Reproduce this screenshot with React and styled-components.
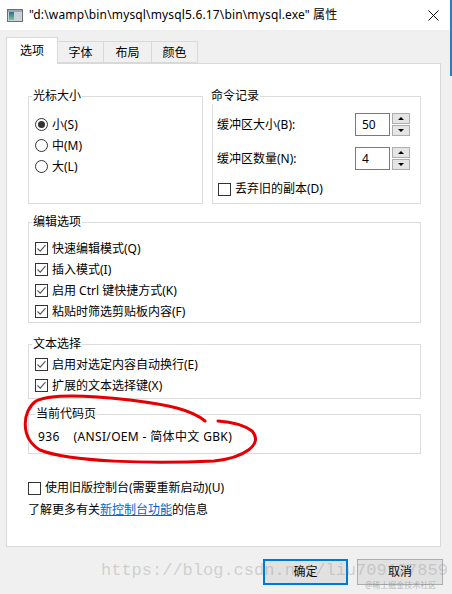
import React from 'react'
import styled, { createGlobalStyle } from 'styled-components'

const GlobalStyle = createGlobalStyle`
  body {
    margin: 0;
    background: #f0f0f0;
  }
`

const Window = styled.div`
  position: relative;
  width: 452px;
  height: 594px;
  overflow: hidden;
  background: #f0f0f0;
  font-family: "Noto Sans", "Noto Sans CJK SC", sans-serif;
  font-size: 12px;
  color: #000;
`

const TitleBar = styled.div`
  height: 30px;
  background: #fff;
  display: flex;
  align-items: center;
  padding-left: 7px;
  box-sizing: border-box;
`

const TitleText = styled.div`
  margin-left: 6px;
  flex: 1;
  white-space: nowrap;
  line-height: 16px;
  letter-spacing: 0.15px;
`

const CloseBtn = styled.div`
  width: 38px;
  height: 30px;
  display: flex;
  align-items: center;
  justify-content: center;
`

const EdgeGlow = styled.div`
  position: absolute;
  right: 0;
  top: 0;
  width: 2px;
  height: 76px;
  background: #1883d7;
`

const Body = styled.div`
  padding: 0 11px 0 6px;
`

const TabRow = styled.div`
  display: flex;
  align-items: flex-end;
  height: 26px;
  margin-top: 7px;
  position: relative;
  z-index: 1;
`

const Tab = styled.div`
  box-sizing: border-box;
  height: ${p => (p.$active ? '27px' : '22px')};
  margin-bottom: ${p => (p.$active ? '-1px' : '0')};
  width: ${p => p.$w}px;
  background: ${p => (p.$active ? '#fff' : '#f0f0f0')};
  border: 1px solid #d9d9d9;
  border-bottom: ${p => (p.$active ? 'none' : '1px solid #d9d9d9')};
  margin-left: ${p => (p.$active ? '0' : '-1px')};
  display: flex;
  justify-content: center;
  padding-top: ${p => (p.$active ? '5px' : '3px')};
  line-height: 16px;
`

const Panel = styled.div`
  box-sizing: border-box;
  height: 484px;
  background: #fff;
  border: 1px solid #d9d9d9;
  padding: 0 19px 0 21px;
  display: flex;
  flex-direction: column;
`

const GroupRow = styled.div`
  display: flex;
  gap: 9px;
  margin-top: 24px;
`

const Group = styled.fieldset`
  margin: ${p => p.$mt || 0}px 0 0 0;
  min-width: 0;
  box-sizing: border-box;
  border: 1px solid #dcdcdc;
  padding: ${p => p.$pad || '0 6px'};
  width: ${p => (p.$w ? p.$w + 'px' : 'auto')};
  flex: ${p => (p.$grow ? '1' : 'none')};
  display: flex;
  flex-direction: column;
`

const Legend = styled.legend`
  margin-left: -3px;
  padding: 0 1px;
  line-height: 16px;
  font-size: 12px;
`

const OptionRow = styled.div`
  display: flex;
  align-items: center;
  height: ${p => p.$h || 21}px;
  margin-top: ${p => p.$mt || 0}px;
  padding-left: ${p => p.$pl || 0}px;
  white-space: nowrap;
  line-height: 16px;
`

const RadioDot = styled.span`
  box-sizing: border-box;
  width: 13px;
  height: 13px;
  border-radius: 50%;
  border: 1px solid #333;
  margin-right: 4px;
  display: flex;
  align-items: center;
  justify-content: center;
  &::after {
    content: '';
    width: 7px;
    height: 7px;
    border-radius: 50%;
    background: ${p => (p.$on ? '#333' : 'transparent')};
  }
`

const CheckBox = styled.span`
  box-sizing: border-box;
  width: 13px;
  height: 13px;
  border: 1px solid #333;
  background: #fff;
  margin-right: 4px;
  display: flex;
  align-items: center;
  justify-content: center;
  flex: none;
`

const FieldRow = styled.div`
  display: flex;
  align-items: center;
  justify-content: space-between;
  height: 23px;
  padding: 0 10px 0 4px;
  margin-top: ${p => p.$mt || 0}px;
  white-space: nowrap;
  line-height: 16px;
`

const Spin = styled.div`
  box-sizing: border-box;
  display: flex;
  width: 55px;
  height: 23px;
`

const SpinInput = styled.div`
  box-sizing: border-box;
  flex: 1;
  border: 1px solid #7a7a7a;
  padding-left: 6px;
  display: flex;
  align-items: center;
  line-height: 16px;
`

const SpinButtons = styled.div`
  width: 18px;
  margin-left: 2px;
  display: flex;
  flex-direction: column;
  gap: 1px;
`

const SpinButton = styled.div`
  box-sizing: border-box;
  flex: 1;
  border: 1px solid #adadad;
  background: #e5e5e5;
  display: flex;
  align-items: center;
  justify-content: center;
  &::after {
    content: '';
    border-left: 3px solid transparent;
    border-right: 3px solid transparent;
    ${p => (p.$up ? 'border-bottom: 3px solid #000;' : 'border-top: 3px solid #000;')}
  }
`

const CodePage = styled.div`
  height: 20px;
  display: flex;
  align-items: center;
  white-space: pre;
  line-height: 16px;
  letter-spacing: 0.35px;
`

const InfoLine = styled.div`
  height: 20px;
  margin-top: 2px;
  display: flex;
  align-items: center;
  line-height: 16px;
`

const Link = styled.a`
  color: #0066cc;
  text-decoration: underline;
`

const ButtonRow = styled.div`
  display: flex;
  justify-content: flex-end;
  gap: 9px;
  margin-top: 12px;
  padding-right: 9px;
`

const Button = styled.div`
  box-sizing: border-box;
  width: ${p => p.$w}px;
  height: 26px;
  background: #e1e1e1;
  border: ${p => (p.$primary ? '2px solid #0078d7' : '1px solid #adadad')};
  display: flex;
  align-items: center;
  justify-content: center;
  line-height: 16px;
`

const Watermark = styled.div`
  position: absolute;
  left: 101px;
  top: 561px;
  font-family: "Liberation Mono", monospace;
  font-size: 17px;
  color: rgba(150, 150, 150, 0.38);
  white-space: nowrap;
  pointer-events: none;
`

const Stamp = styled.div`
  position: absolute;
  left: 365px;
  top: 579px;
  font-size: 8px;
  line-height: 12px;
  color: rgba(140, 140, 140, 0.6);
  white-space: nowrap;
  pointer-events: none;
`

const Scribble = styled.svg`
  position: absolute;
  left: 0;
  top: 0;
  pointer-events: none;
`

const Check = () => (
  <svg width="11" height="11" viewBox="0 0 11 11">
    <path d="M1.5 5.5 L4.2 8.2 L9.5 2.2" fill="none" stroke="#555" strokeWidth="1.1" />
  </svg>
)

const CheckItem = ({ on, children, h, mt, pl }) => (
  <OptionRow $h={h} $mt={mt} $pl={pl}>
    <CheckBox>{on && <Check />}</CheckBox>
    {children}
  </OptionRow>
)

const RadioItem = ({ on, children }) => (
  <OptionRow>
    <RadioDot $on={on} />
    {children}
  </OptionRow>
)

const SpinBox = ({ value }) => (
  <Spin>
    <SpinInput>{value}</SpinInput>
    <SpinButtons>
      <SpinButton $up />
      <SpinButton />
    </SpinButtons>
  </Spin>
)

const ConsoleIcon = () => (
  <svg width="16" height="13" viewBox="0 0 16 13">
    <defs>
      <linearGradient id="ci" x1="0" y1="0" x2="0" y2="1">
        <stop offset="0" stopColor="#2d6d92" />
        <stop offset="1" stopColor="#7cc48a" />
      </linearGradient>
    </defs>
    <rect x="0.5" y="0.5" width="15" height="12" fill="#c9d3dc" stroke="#6f6f6f" />
    <rect x="1" y="1" width="14" height="2" fill="#9aa6b2" />
    <rect x="2" y="3" width="5" height="8" fill="url(#ci)" />
  </svg>
)

const App = () => {
  return (
    <Window>
      <GlobalStyle />
      <TitleBar>
        <ConsoleIcon />
        <TitleText>"d:\wamp\bin\mysql\mysql5.6.17\bin\mysql.exe" 属性</TitleText>
        <CloseBtn>
          <svg width="11" height="11" viewBox="0 0 11 11">
            <path d="M0.5 0.5 L10.5 10.5 M10.5 0.5 L0.5 10.5" stroke="#111" strokeWidth="1" />
          </svg>
        </CloseBtn>
      </TitleBar>
      <EdgeGlow />
      <Body>
        <TabRow>
          <Tab $active $w={52}>选项</Tab>
          <Tab $w={47}>字体</Tab>
          <Tab $w={49}>布局</Tab>
          <Tab $w={47}>颜色</Tab>
        </TabRow>
        <Panel>
          <GroupRow>
            <Group $w={175} $pad="10px 6px 0">
              <Legend>光标大小</Legend>
              <RadioItem on>小(S)</RadioItem>
              <RadioItem>中(M)</RadioItem>
              <RadioItem>大(L)</RadioItem>
            </Group>
            <Group $grow $pad="9px 0 4px">
              <Legend>命令记录</Legend>
              <FieldRow>
                缓冲区大小(B):
                <SpinBox value="50" />
              </FieldRow>
              <FieldRow $mt={11}>
                缓冲区数量(N):
                <SpinBox value="4" />
              </FieldRow>
              <CheckItem h={20} mt={9} pl={5}>丢弃旧的副本(D)</CheckItem>
            </Group>
          </GroupRow>
          <Group $mt={10} $pad="8px 6px 0">
            <Legend>编辑选项</Legend>
            <CheckItem on>快速编辑模式(Q)</CheckItem>
            <CheckItem on>插入模式(I)</CheckItem>
            <CheckItem on>启用 Ctrl 键快捷方式(K)</CheckItem>
            <CheckItem on>粘贴时筛选剪贴板内容(F)</CheckItem>
          </Group>
          <Group $mt={13} $pad="2px 6px 2px">
            <Legend>文本选择</Legend>
            <CheckItem on>启用对选定内容自动换行(E)</CheckItem>
            <CheckItem on>扩展的文本选择键(X)</CheckItem>
          </Group>
          <Group $mt={7} $pad="5px 9px 6px">
            <Legend>当前代码页</Legend>
            <CodePage>{'936    (ANSI/OEM - 简体中文 GBK)'}</CodePage>
          </Group>
          <CheckItem h={20} mt={24}>使用旧版控制台(需要重新启动)(U)</CheckItem>
          <InfoLine>
            了解更多有关<Link>新控制台功能</Link>的信息
          </InfoLine>
        </Panel>
      </Body>
      <ButtonRow>
        <Button $primary $w={85}>确定</Button>
        <Button $w={86}>取消</Button>
      </ButtonRow>
      <Watermark>https://blog.csdn.net/liu709127859</Watermark>
      <Stamp>@稀土掘金技术社区</Stamp>
      <Scribble width="452" height="594" viewBox="0 0 452 594">
        <path
          d="M205 421 C 192 410, 170 405, 130 400 C 95 396, 52 393, 36 401 C 22 411, 20 438, 40 450 C 70 462, 150 464, 214 461 C 244 458, 264 444, 252 431 C 244 425, 232 422, 218 421"
          fill="none"
          stroke="#e40000"
          strokeWidth="3"
          strokeLinecap="round"
        />
      </Scribble>
    </Window>
  )
}

export default App
